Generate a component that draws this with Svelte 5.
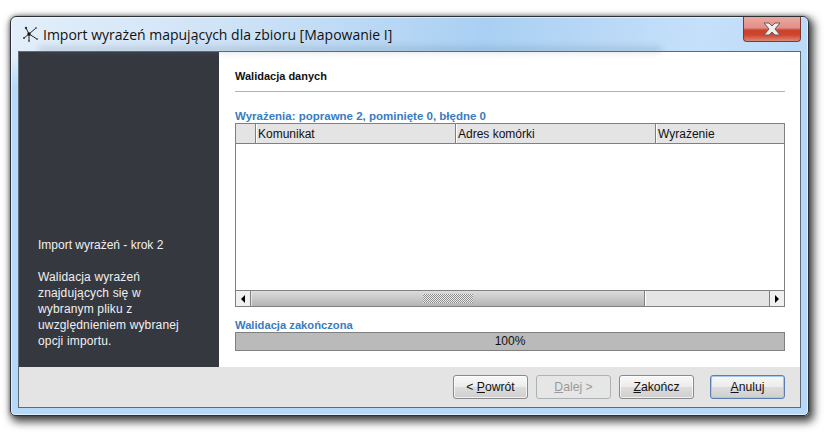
<script>
  // kolumny tabeli z wyrażeniami
  const columns = [
    { name: 'Komunikat', width: 200 },
    { name: 'Adres komórki', width: 200 },
    { name: 'Wyrażenie', width: 128 }
  ]
  const buttons = [
    { before: '< ', key: 'P', after: 'owrót' },
    { before: '', key: 'D', after: 'alej >', disabled: true },
    { before: '', key: 'Z', after: 'akończ' },
    { before: '', key: 'A', after: 'nuluj', focused: true }
  ]
</script>

<div class="page">
  <div class="window">
    <div class="titlebar">
      <svg class="logo" width="18" height="18" viewBox="0 0 18 18">
        <path d="M7 9 L4 3 M7 9 L14 3 M7 9 L2 13 M7 9 L15 14 M7 9 L7 16" stroke="#222" stroke-width="1" fill="none" />
        <circle cx="7" cy="9" r="1.7" fill="#111" />
        <circle cx="4" cy="3" r="1.2" fill="#333" />
        <circle cx="14" cy="3" r="1" fill="#666" />
        <circle cx="2" cy="13" r="1" fill="#333" />
        <circle cx="15" cy="14" r="1.1" fill="#666" />
        <circle cx="7" cy="16" r="1" fill="#555" />
      </svg>
      <span class="title">Import wyrażeń mapujących dla zbioru [Mapowanie I]</span>
      <div class="close">
        <svg width="20" height="14" viewBox="0 0 20 14">
          <path d="M2 1 H7 L10 4 L13 1 H18 L13 7 L18 13 H13 L10 10 L7 13 H2 L7 7 Z" fill="#eee" stroke="#6b5a58" stroke-width="1" />
        </svg>
      </div>
    </div>
    <div class="client">
      <div class="main">
        <aside class="side">
          <p>Import wyrażeń - krok 2</p>
          <p class="wide">Walidacja wyrażeń<br />znajdujących się w<br />wybranym pliku z<br />uwzględnieniem wybranej<br />opcji importu.</p>
        </aside>
        <section class="content">
          <h1>Walidacja danych</h1>
          <div class="rule"></div>
          <div class="label first">Wyrażenia: poprawne 2, pominięte 0, błędne 0</div>
          <div class="table">
            <div class="thead">
              <div class="corner"></div>
              {#each columns as col}
                <div class="th" style="width: {col.width}px">{col.name}</div>
              {/each}
            </div>
            <div class="tbody"></div>
            <div class="scroll">
              <div class="arrow"><i class="left"></i></div>
              <div class="thumb"><div class="grip"></div></div>
              <div class="track"></div>
              <div class="arrow end"><i class="right"></i></div>
            </div>
          </div>
          <div class="label second">Walidacja zakończona</div>
          <div class="progress">100%</div>
        </section>
      </div>
      <footer class="footer">
        {#each buttons as b}
          <button class:focused={b.focused} disabled={b.disabled}>{b.before}<u>{b.key}</u>{b.after}</button>
        {/each}
      </footer>
    </div>
  </div>
</div>

<style>
  :global(body) {
    background: #fff;
  }
  .page {
    width: 825px;
    height: 433px;
    padding: 16px 16px 17px 10px;
    box-sizing: border-box;
    overflow: hidden;
  }
  .window {
    width: 799px;
    height: 400px;
    box-sizing: border-box;
    border: 1px solid #2c2f33;
    border-radius: 6px 6px 5px 5px;
    padding: 0 7px 7px 7px;
    display: flex;
    flex-direction: column;
    background:
      linear-gradient(to bottom, rgba(182, 217, 249, 0) 40px, #b6d9f9 70px),
      linear-gradient(100deg, #e3effa 0%, #cfe3f7 25%, #a9d0f3 55%, #c6e0fa 80%, #b3d6f7 100%);
    box-shadow: 3px 4px 8px 2px rgba(0, 0, 0, 0.7), 0 0 4px rgba(0, 0, 0, 0.4), inset 0 0 0 1px rgba(255, 255, 255, 0.55);
  }
  .titlebar {
    height: 34px;
    flex: none;
    display: flex;
    align-items: center;
    position: relative;
    box-sizing: border-box;
  }
  .titlebar::after {
    content: '';
    position: absolute;
    left: 20px;
    right: 140px;
    bottom: -1px;
    height: 5px;
    background: rgba(90, 110, 130, 0.28);
    filter: blur(3px);
  }
  .logo {
    margin: 0 3px 0 4px;
    flex: none;
  }
  .title {
    font: 14px "Open Sans", "Noto Sans", sans-serif;
    color: #111;
    white-space: nowrap;
  }
  .close {
    position: absolute;
    top: 0;
    right: 0;
    width: 58px;
    height: 25px;
    box-sizing: border-box;
    border: 1px solid #7a3a32;
    border-top: none;
    border-radius: 0 0 4px 4px;
    display: flex;
    align-items: center;
    justify-content: center;
    background: linear-gradient(#eba8a0 0%, #e09088 45%, #c9432c 55%, #d0442e 75%, #d98a78 100%);
  }
  .client {
    flex: 1;
    display: flex;
    flex-direction: column;
    background: #fff;
    border: 1px solid #5e6a74;
    min-height: 0;
  }
  .main {
    flex: 1;
    display: flex;
    min-height: 0;
  }
  .side {
    width: 200px;
    flex: none;
    box-sizing: border-box;
    background: #363840;
    color: #f0f0f0;
    padding: 185px 8px 0 19px;
    font: 12px/16px "Liberation Sans", Arial, sans-serif;
  }
  .side p {
    margin: 0 0 16px;
    white-space: nowrap;
  }
  .side .wide {
    letter-spacing: 0.15px;
  }
  .content {
    flex: 1;
    padding: 0 15px 0 16px;
    display: flex;
    flex-direction: column;
  }
  h1 {
    font: bold 11px/14px "Liberation Sans", Arial, sans-serif;
    color: #111;
    margin: 17px 0 0;
  }
  .rule {
    height: 1px;
    background: #b4b2aa;
    margin-top: 8px;
  }
  .label {
    font: bold 11.5px/13px "Liberation Sans", Arial, sans-serif;
    color: #3a7cc0;
  }
  .label.first {
    margin-top: 18px;
  }
  .label.second {
    margin-top: 12px;
    font-size: 11.2px;
  }
  .table {
    height: 184px;
    flex: none;
    box-sizing: border-box;
    border: 1px solid #808080;
    display: flex;
    flex-direction: column;
  }
  .thead {
    display: flex;
    height: 20px;
    flex: none;
    background: #e4e4e4;
    border-bottom: 1px solid #808080;
    box-sizing: border-box;
  }
  .corner {
    width: 19px;
    flex: none;
    border-right: 1px solid #808080;
    box-shadow: 1px 0 0 #fff;
  }
  .th {
    box-sizing: border-box;
    padding-left: 2px;
    border-right: 1px solid #808080;
    box-shadow: 1px 0 0 #fff;
    font: 12px/20px "Liberation Sans", Arial, sans-serif;
    color: #111;
  }
  .th:last-child {
    border-right: none;
    box-shadow: none;
    flex: 1;
  }
  .tbody {
    flex: 1;
  }
  .scroll {
    height: 15px;
    flex: none;
    display: flex;
    border-top: 1px solid #808080;
    background: #e4e4e4;
  }
  .arrow {
    width: 15px;
    flex: none;
    display: flex;
    align-items: center;
    justify-content: center;
    border-right: 1px solid #808080;
    box-sizing: border-box;
    background: #f0f0f0;
  }
  .arrow.end {
    border-right: none;
    border-left: 1px solid #808080;
  }
  .arrow i {
    display: block;
    border-top: 4px solid transparent;
    border-bottom: 4px solid transparent;
  }
  .arrow .left {
    border-right: 4px solid #000;
  }
  .arrow .right {
    border-left: 4px solid #000;
  }
  .thumb {
    width: 392px;
    flex: none;
    margin-left: 1px;
    border-right: 1px solid #808080;
    box-shadow: 1px 0 0 #fff;
    display: flex;
    align-items: center;
    justify-content: center;
    background: linear-gradient(#dcdcdc, #b4b4b4);
  }
  .grip {
    width: 50px;
    height: 9px;
    background: repeating-conic-gradient(#8c8c8c 0 25%, #eee 0 50%) 0 0 / 2px 2px;
  }
  .track {
    flex: 1;
  }
  .progress {
    height: 19px;
    flex: none;
    box-sizing: border-box;
    background: #bababa;
    border: 1px solid #808080;
    text-align: center;
    font: 12px/17px "Liberation Sans", Arial, sans-serif;
    color: #111;
  }
  .footer {
    height: 40px;
    flex: none;
    box-sizing: border-box;
    background: #e4e4e4;
    display: flex;
    justify-content: flex-end;
    gap: 8px;
    padding: 8px 15px 0 0;
  }
  .footer button {
    width: 75px;
    height: 24px;
    padding: 0;
    box-sizing: border-box;
    border: 1px solid #8a8a8a;
    border-radius: 3px;
    background: linear-gradient(#f8f8f8 0%, #ececec 48%, #dcdcdc 52%, #cfcfcf 100%);
    box-shadow: inset 0 0 0 1px rgba(255, 255, 255, 0.7);
    font: 12.2px "Liberation Sans", Arial, sans-serif;
    color: #111;
  }
  .footer button:disabled {
    background: #e6e6e6;
    border-color: #adb2b5;
    box-shadow: none;
    color: #9a9a9a;
  }
  .footer button.focused {
    margin-left: 8px;
    border-color: #5a7fb0;
    box-shadow: inset 0 0 0 1px #a8c8ea;
  }
</style>
